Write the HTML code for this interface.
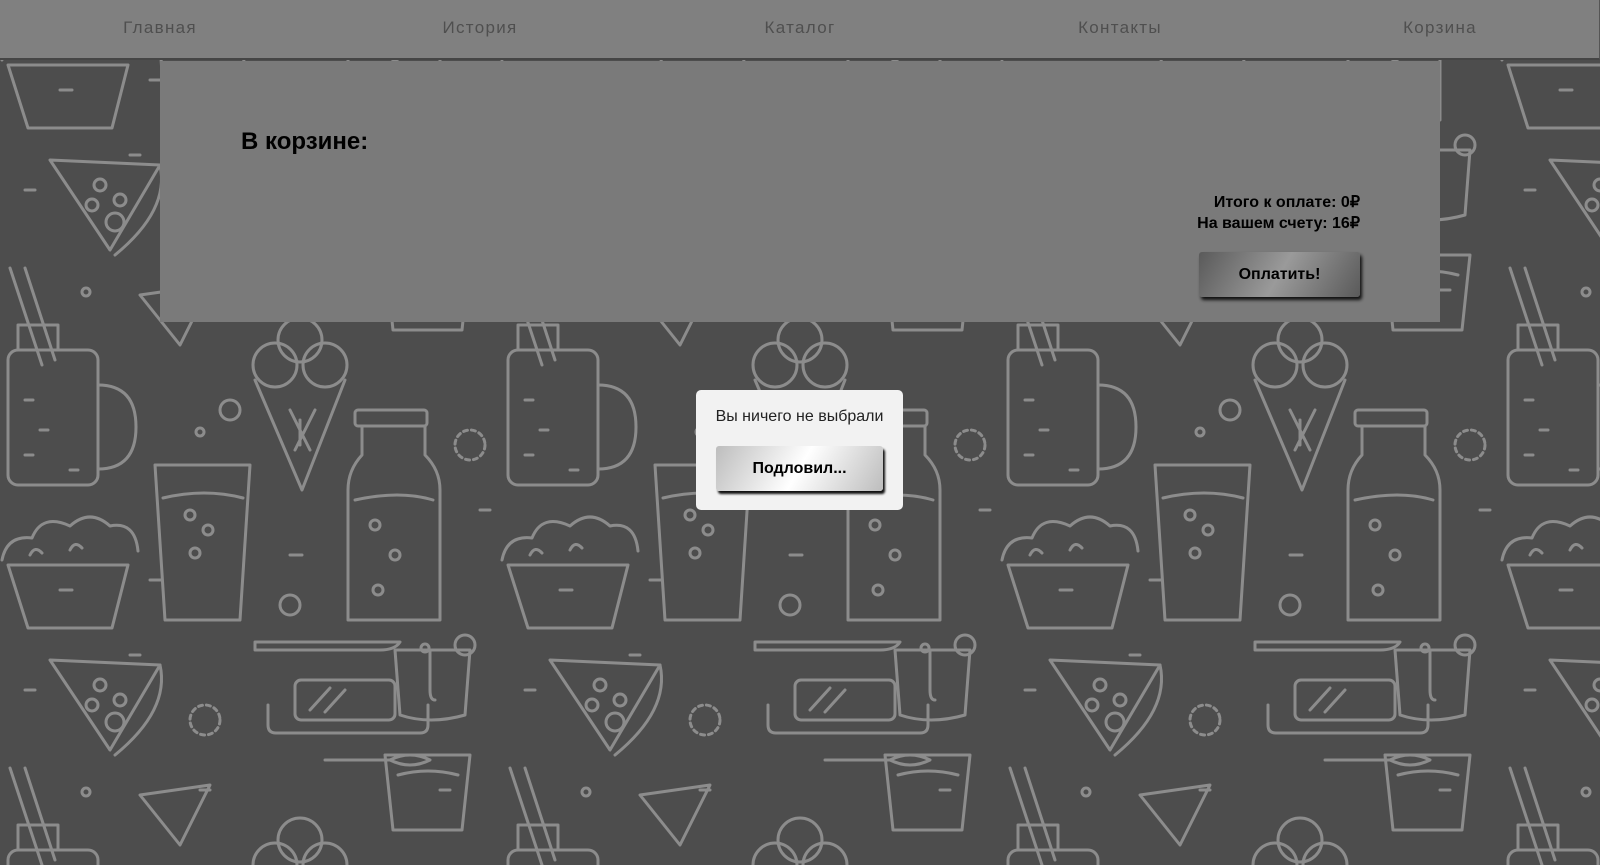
<!DOCTYPE html>
<html><head><meta charset="utf-8">
<style>
html,body{margin:0;padding:0;width:1600px;height:865px;overflow:hidden;background:#4d4d4d;font-family:"Liberation Sans",Arial,sans-serif;}
#bg{position:absolute;left:0;top:0;width:1600px;height:865px;}
nav{position:absolute;left:0;top:0;width:1599px;height:58px;background:#808080;border-bottom:2px solid #454545;border-right:1px solid #555;}
nav a{position:absolute;top:18px;width:320px;text-align:center;color:#4f4f4f;font-size:17px;letter-spacing:1.3px;text-decoration:none;}
.panel{position:absolute;left:160px;top:61px;width:1280px;height:261px;background:#7a7a7a;}
h2{position:absolute;left:81px;top:67px;margin:0;font-size:24px;font-weight:bold;color:#000;}
.tot{position:absolute;right:80px;top:131px;text-align:right;font-weight:bold;font-size:16px;line-height:21px;color:#000;}
.pay{position:absolute;left:1039px;top:191px;width:161px;height:45px;border-radius:3px;background:linear-gradient(120deg,#5a5a5a,#9a9a9a 50%,#5a5a5a);box-shadow:2px 3px 3px #111;text-align:center;line-height:45px;font-size:16px;font-weight:bold;color:#000;}
.modal{position:absolute;left:696px;top:390px;width:207px;height:120px;background:#f2f2f2;border-radius:5px;}
.modal p{margin:0;position:absolute;top:18px;width:100%;text-align:center;font-size:16px;color:#222;}
.ok{position:absolute;left:20px;top:56px;width:167px;height:45px;border-radius:3px;background:linear-gradient(120deg,#bdbdbd,#fff 50%,#bdbdbd);box-shadow:2px 3px 2px #111;text-align:center;line-height:45px;font-size:16px;font-weight:bold;color:#000;}
</style></head><body>
<svg id="bg" width="1600" height="865">
<defs>
<g id="s" fill="none" stroke="#8c8c8c" stroke-width="3" stroke-linecap="round" stroke-linejoin="round">
<!-- mug -->
<rect x="8" y="350" width="90" height="135" rx="10"/><path d="M98 385 q38 0 38 42 q0 42 -38 42"/><line x1="10" y1="268" x2="42" y2="365"/><line x1="25" y1="268" x2="55" y2="360"/><rect x="18" y="325" width="40" height="25"/>
<path d="M25 400 h8 M40 430 h8 M25 455 h8 M70 470 h8"/>
<!-- cone -->
<circle cx="275" cy="365" r="22"/><circle cx="300" cy="340" r="22"/><circle cx="325" cy="365" r="22"/><path d="M255 380 L302 490 L345 380"/><path d="M290 410 l20 40 M315 410 l-20 40 M300 420 v25"/>
<!-- glass -->
<path d="M155 465 L250 465 L240 620 L165 620 Z"/><path d="M163 498 q42 -10 80 0"/><circle cx="190" cy="515" r="5"/><circle cx="208" cy="530" r="5"/><circle cx="195" cy="553" r="5"/>
<!-- bottle -->
<rect x="355" y="410" width="72" height="16" rx="3"/><path d="M362 426 L362 455 Q348 470 348 490 L348 620 L440 620 L440 490 Q440 470 425 455 L425 426"/><path d="M355 500 q45 -10 78 0"/><circle cx="375" cy="525" r="5"/><circle cx="395" cy="555" r="5"/><circle cx="378" cy="590" r="5"/>
<!-- basket -->
<path d="M2 560 q5 -25 30 -22 q10 -25 38 -12 q20 -18 40 0 q25 -5 28 25"/><path d="M8 565 L28 628 L112 628 L128 565 Z"/><path d="M30 555 q5 -10 12 -2 M70 550 q5 -10 12 -2"/>
<!-- cheese -->
<path d="M50 160 L160 165 L110 250 Z"/><path d="M160 165 q10 45 -45 90"/><circle cx="100" cy="185" r="6"/><circle cx="120" cy="200" r="6"/><circle cx="92" cy="205" r="6"/><circle cx="115" cy="222" r="9"/>
<!-- butter -->
<rect x="295" y="680" width="100" height="40" rx="6"/><path d="M268 705 L268 725 q0 8 8 8 L420 733 q8 0 8 -8 L428 705"/><path d="M255 650 L380 650 q15 0 20 -8 L255 642 Z"/><path d="M310 710 l20 -22 M325 712 l20 -22"/>
<!-- cup / cup top -->
<path d="M395 150 L470 150 L465 215 q-35 10 -65 0 Z"/><path d="M430 150 v40 q0 10 5 10"/>
<path d="M385 255 L470 255 L462 330 L393 330 Z"/><path d="M398 275 q30 -8 60 0"/>
<!-- slice -->
<path d="M140 295 L210 285 L180 345 Z"/>
<!-- spoon -->
<path d="M325 760 L390 760 q20 -10 40 0 q-20 10 -40 0"/>
<circle cx="230" cy="410" r="10"/><circle cx="290" cy="605" r="10"/><circle cx="465" cy="645" r="10"/><circle cx="205" cy="720" r="15" stroke-dasharray="4 4"/><circle cx="470" cy="445" r="15" stroke-dasharray="4 4"/><circle cx="86" cy="292" r="4"/><circle cx="200" cy="432" r="4"/><circle cx="425" cy="648" r="4"/>
<path d="M25 190 h10 M60 590 h12 M150 580 h12 M290 555 h12 M200 790 h10 M130 655 h10 M440 290 h10 M480 510 h10"/>
</g>
<pattern id="p" width="500" height="500" patternUnits="userSpaceOnUse" x="0" y="0">
<use href="#s"/><use href="#s" y="-500"/><use href="#s" x="-500"/><use href="#s" x="-500" y="-500"/><use href="#s" y="500"/><use href="#s" x="500"/><use href="#s" x="500" y="-500"/>
</pattern></defs>
<rect width="1600" height="865" fill="url(#p)"/>
</svg>
<nav><a style="left:0">Главная</a><a style="left:320px">История</a><a style="left:640px">Каталог</a><a style="left:960px">Контакты</a><a style="left:1280px">Корзина</a></nav>
<div class="panel"><h2>В корзине:</h2>
<div class="tot">Итого к оплате: 0₽<br>На вашем счету: 16₽</div>
<div class="pay">Оплатить!</div></div>
<div class="modal"><p>Вы ничего не выбрали</p><div class="ok">Подловил...</div></div>
</body></html>
